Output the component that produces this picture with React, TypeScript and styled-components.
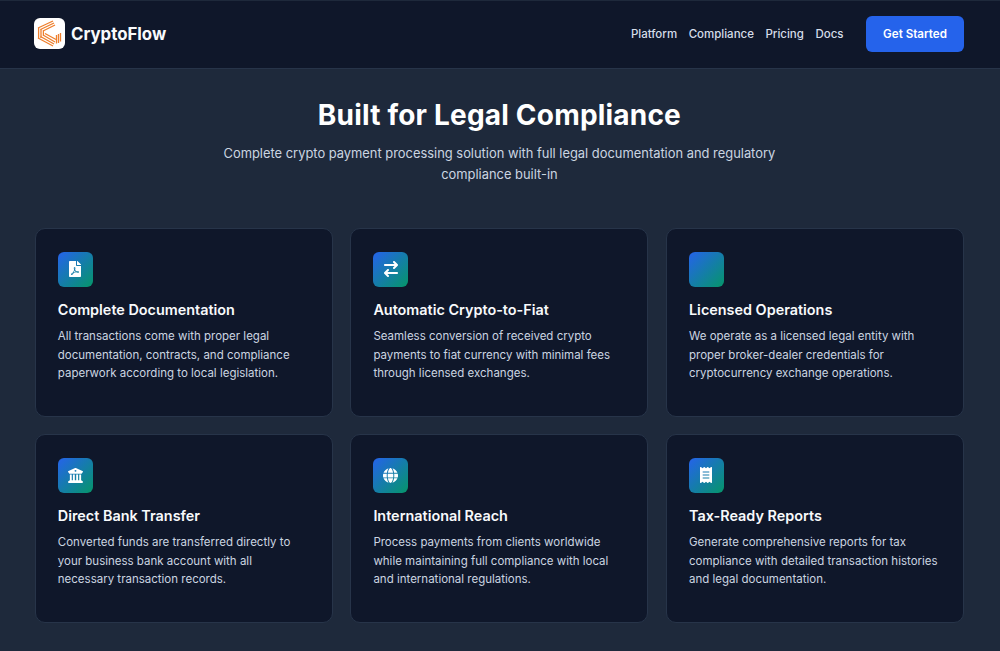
import React from "react";
import styled, { createGlobalStyle } from "styled-components";
import { FaFilePdf } from "react-icons/fa";
import {
  FaArrowRightArrowLeft,
  FaBuildingColumns,
  FaGlobe,
  FaReceipt,
} from "react-icons/fa6";

interface Feature {
  title: string;
  text: string[];
  icon: React.ReactNode;
}

const features: Feature[] = [
  {
    title: "Complete Documentation",
    text: [
      "All transactions come with proper legal",
      "documentation, contracts, and compliance",
      "paperwork according to local legislation.",
    ],
    icon: <FaFilePdf size={16} />,
  },
  {
    title: "Automatic Crypto-to-Fiat",
    text: [
      "Seamless conversion of received crypto",
      "payments to fiat currency with minimal fees",
      "through licensed exchanges.",
    ],
    icon: <FaArrowRightArrowLeft size={16} />,
  },
  {
    title: "Licensed Operations",
    text: [
      "We operate as a licensed legal entity with",
      "proper broker-dealer credentials for",
      "cryptocurrency exchange operations.",
    ],
    icon: null,
  },
  {
    title: "Direct Bank Transfer",
    text: [
      "Converted funds are transferred directly to",
      "your business bank account with all",
      "necessary transaction records.",
    ],
    icon: <FaBuildingColumns size={15} />,
  },
  {
    title: "International Reach",
    text: [
      "Process payments from clients worldwide",
      "while maintaining full compliance with local",
      "and international regulations.",
    ],
    icon: <FaGlobe size={15} />,
  },
  {
    title: "Tax-Ready Reports",
    text: [
      "Generate comprehensive reports for tax",
      "compliance with detailed transaction histories",
      "and legal documentation.",
    ],
    icon: <FaReceipt size={16} />,
  },
];

const Logo: React.FC = () => (
  <LogoBox>
    <svg width="31" height="31" viewBox="0 0 31 31" fill="none" stroke="#ee7f2d" strokeWidth="1.3">
      <path d="M4 10 L19 3 M6.5 11.5 L20 5 M9 13 L21 7" />
      <path d="M4.6 10 V20.5 M7 11 V20 M9.4 12.5 V17.5" />
      <path d="M4 20 L19 28 M6.5 18.5 L20 26 M9 17 L21 24 M11 15.5 L22 21.5" />
      <path d="M26.5 15 V23.5 M24.5 16 V25 M22.5 17 V25.5" />
    </svg>
  </LogoBox>
);

const App: React.FC = () => {
  return (
    <>
      <GlobalStyle />
      <Header>
        <Brand>
          <Logo />
          <BrandName>CryptoFlow</BrandName>
        </Brand>
        <Nav>
          <NavLink>Platform</NavLink>
          <NavLink>Compliance</NavLink>
          <NavLink>Pricing</NavLink>
          <NavLink>Docs</NavLink>
          <CtaButton>Get Started</CtaButton>
        </Nav>
      </Header>
      <Main>
        <Title>Built for Legal Compliance</Title>
        <Subtitle>
          Complete crypto payment processing solution with full legal documentation and regulatory
          compliance built-in
        </Subtitle>
        <Grid>
          {features.map((f) => (
            <Card key={f.title}>
              <IconBox>{f.icon}</IconBox>
              <CardTitle>{f.title}</CardTitle>
              <CardText>
                {f.text.map((line) => (
                  <span key={line}>{line}</span>
                ))}
              </CardText>
            </Card>
          ))}
        </Grid>
      </Main>
    </>
  );
};

export default App;

// Styled Components
const GlobalStyle = createGlobalStyle`
  * {
    box-sizing: border-box;
  }
  html, body {
    margin: 0;
    padding: 0;
    height: 651px;
    overflow: hidden;
    background: #1e293b;
    font-family: Inter, "Liberation Sans", sans-serif;
  }
`;

const Header = styled.header`
  height: 69px;
  padding: 0 36px 2px 34px;
  display: flex;
  align-items: center;
  justify-content: space-between;
  background: #0f172a;
  border-top: 1px solid #1e293b;
  border-bottom: 1px solid #273449;
`;

const Brand = styled.div`
  display: flex;
  align-items: center;
  gap: 6px;
`;

const LogoBox = styled.div`
  width: 31px;
  height: 31px;
  border-radius: 6px;
  background: #ffffff;
  display: flex;
`;

const BrandName = styled.span`
  font-size: 16.8px;
  font-weight: 700;
  color: #f8fafc;
`;

const Nav = styled.nav`
  display: flex;
  align-items: center;
  gap: 11.5px;
`;

const NavLink = styled.a`
  font-size: 11.5px;
  font-weight: 500;
  color: #d5dde8;
`;

const CtaButton = styled.button`
  width: 98px;
  height: 36px;
  margin-left: 11px;
  border: none;
  border-radius: 6px;
  background: #2563eb;
  color: #ffffff;
  font-family: inherit;
  font-size: 11.6px;
  font-weight: 600;
`;

const Main = styled.main`
  padding: 28px 36px 0 34.8px;
  display: flex;
  flex-direction: column;
  align-items: center;
`;

const Title = styled.h1`
  margin: 0;
  font-size: 28px;
  line-height: 36px;
  font-weight: 700;
  color: #ffffff;
  letter-spacing: 0.2px;
`;

const Subtitle = styled.p`
  width: 580px;
  margin: 11.4px 0 0;
  font-size: 12.9px;
  line-height: 20.2px;
  text-align: center;
  color: #cbd5e1;
`;

const Grid = styled.div`
  width: 100%;
  margin-top: 43.6px;
  display: grid;
  grid-template-columns: repeat(3, 298px);
  grid-auto-rows: 188.4px;
  gap: 17.6px 17.6px;
`;

const Card = styled.article`
  padding: 22.6px 22px 22px;
  border: 1px solid #273449;
  border-radius: 10px;
  background: #0f172a;
`;

const IconBox = styled.div`
  width: 35px;
  height: 35px;
  border-radius: 6px;
  background: linear-gradient(135deg, #2563eb, #059669);
  color: #ffffff;
  display: flex;
  align-items: center;
  justify-content: center;
`;

const CardTitle = styled.h3`
  margin: 13.4px 0 0;
  font-size: 14.4px;
  line-height: 20px;
  font-weight: 600;
  color: #f8fafc;
`;

const CardText = styled.p`
  margin: 7px 0 0;
  font-size: 11.5px;
  line-height: 18.15px;
  color: #cbd5e1;

  span {
    display: block;
    white-space: nowrap;
  }
`;
